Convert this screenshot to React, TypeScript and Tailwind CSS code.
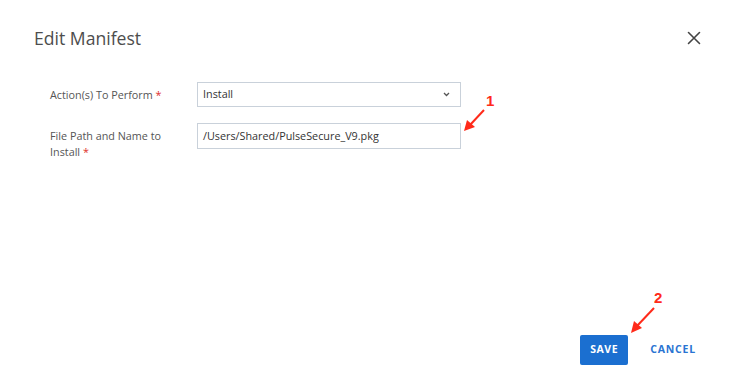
import React from "react";

export default function App() {
  return (
    <div
      className="relative flex h-[390px] w-[730px] flex-col bg-white text-[#4a4a4a]"
      style={{ fontFamily: '"Open Sans", "Noto Sans", sans-serif' }}
    >
      <div className="flex items-center justify-between pl-[34px] pr-[29px] pt-[26px]">
        <h1 className="text-[17.6px] leading-[24px] text-[#4d4d4d]">Edit Manifest</h1>
        <svg width="14" height="14" viewBox="0 0 14 14" className="text-[#444]">
          <path d="M1.5 1.5 L12.5 12.5 M12.5 1.5 L1.5 12.5" stroke="currentColor" strokeWidth="1.6" strokeLinecap="round" />
        </svg>
      </div>

      <div className="mt-[32px] flex flex-col gap-[16px] pl-[50px]">
        <div className="flex items-center">
          <div className="w-[147px] text-[10.8px] leading-[16px] text-[#555]">
            Action(s) To Perform <span className="text-[#e0302a]">*</span>
          </div>
          <div className="flex h-[25px] w-[264px] items-center justify-between border border-[#c9d1da] pl-[5px] pr-[10px] text-[10.8px] text-[#333]">
            <span>Install</span>
            <svg width="7" height="5" viewBox="0 0 7 5">
              <path d="M1 1 L3.5 3.5 L6 1" stroke="#555" strokeWidth="1.3" fill="none" />
            </svg>
          </div>
        </div>
        <div className="flex items-start">
          <div className="w-[147px] pr-[14px] pt-[5px] text-[10.8px] leading-[16px] text-[#555]">
            <div>File Path and Name to</div>
            <div>
              Install <span className="text-[#e0302a]">*</span>
            </div>
          </div>
          <div className="flex h-[26px] w-[264px] items-center border border-[#c9d1da] pl-[5px] text-[10.8px] text-[#333]">
            /Users/Shared/PulseSecure_V9.pkg
          </div>
        </div>
      </div>

      <div className="mt-auto flex items-center justify-end gap-[22px] pb-[25px] pr-[34px]">
        <button className="h-[30px] w-[48px] rounded-[2px] bg-[#1b6fd0] text-[10.5px] font-bold tracking-[0.6px] text-white">
          SAVE
        </button>
        <span className="text-[10.5px] font-bold tracking-[0.8px] text-[#2a74d2]">CANCEL</span>
      </div>

      <svg className="pointer-events-none absolute left-0 top-0" width="730" height="390" viewBox="0 0 730 390">
        <g stroke="#ff2a1a" strokeWidth="2" fill="#ff2a1a">
          <line x1="484" y1="110" x2="470" y2="125" />
          <polygon points="464,131 467,120 475,127" stroke="none" />
          <line x1="654" y1="308" x2="637" y2="326" />
          <polygon points="631,333 634,321 642,328" stroke="none" />
        </g>
        <text x="486" y="106" fill="#ff2a1a" fontSize="15" fontWeight="bold" fontFamily="Liberation Sans, Arial, sans-serif">1</text>
        <text x="654" y="303" fill="#ff2a1a" fontSize="15" fontWeight="bold" fontFamily="Liberation Sans, Arial, sans-serif">2</text>
      </svg>
    </div>
  );
}
